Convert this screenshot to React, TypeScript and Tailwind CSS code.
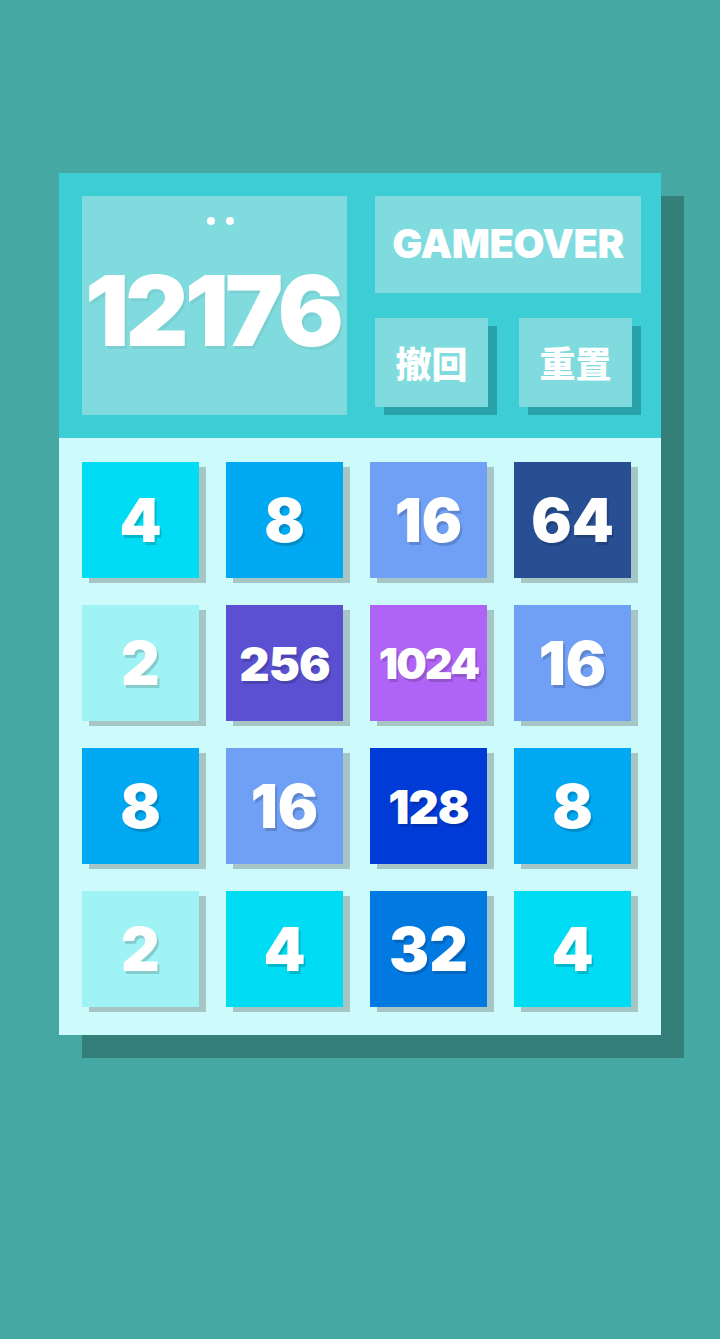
import React from "react";

const tiles: { v: number; bg: string }[] = [
  { v: 4, bg: "bg-[#00dcf4]" },
  { v: 8, bg: "bg-[#00a9f1]" },
  { v: 16, bg: "bg-[#6fa0f6]" },
  { v: 64, bg: "bg-[#284f93]" },
  { v: 2, bg: "bg-[#9ff3f5]" },
  { v: 256, bg: "bg-[#5a50d1]" },
  { v: 1024, bg: "bg-[#b064f6]" },
  { v: 16, bg: "bg-[#6fa0f6]" },
  { v: 8, bg: "bg-[#00a9f1]" },
  { v: 16, bg: "bg-[#6fa0f6]" },
  { v: 128, bg: "bg-[#003bd7]" },
  { v: 8, bg: "bg-[#00a9f1]" },
  { v: 2, bg: "bg-[#9ff3f5]" },
  { v: 4, bg: "bg-[#00dcf4]" },
  { v: 32, bg: "bg-[#0079e1]" },
  { v: 4, bg: "bg-[#00dcf4]" },
];

function sizeFor(v: number) {
  const n = String(v).length;
  if (n <= 2) return "text-[60px]";
  if (n === 3) return "text-[47px] tracking-[-1px]";
  return "text-[43px] tracking-[-2px]";
}

export default function App() {
  return (
    <div
      className="w-[720px] min-h-[1339px] bg-[#45a8a3] pt-[173px] pl-[59px]"
      style={{ fontFamily: "Inter, 'Noto Sans CJK SC', sans-serif" }}
    >
      <div className="w-[602px] shadow-[23px_23px_0_#347f7a]">
        {/* header */}
        <div className="h-[265px] bg-[#3ccdd5] pl-[23px] pt-[23px] flex gap-[28px]">
          <div className="w-[265px] h-[219px] bg-[#80dbde] flex flex-col items-center">
            <div className="flex gap-[11px] mt-[21px] ml-[12px]">
              <div className="w-[8px] h-[8px] rounded-full bg-white" />
              <div className="w-[8px] h-[8px] rounded-full bg-white" />
            </div>
            <div className="mt-[37px] text-white font-black text-[98px] leading-none tracking-[-4px] pr-[4px] [text-shadow:2px_3px_0_rgba(0,0,0,0.05)]">
              12176
            </div>
          </div>
          <div className="w-[266px] flex flex-col">
            <div className="h-[97px] bg-[#80dbde] flex items-center justify-center text-white font-black text-[40px] tracking-[-0.5px] pb-[2px]">
              GAMEOVER
            </div>
            <div className="flex gap-[31px] mt-[25px]">
              <div
                className="w-[113px] h-[89px] bg-[#80dbde] shadow-[9px_8px_0_#2aa2aa] flex items-center justify-center text-white font-black text-[36px] pb-[2px]"
                style={{ fontFamily: "'Noto Sans CJK SC', sans-serif" }}
              >
                撤回
              </div>
              <div
                className="w-[113px] h-[89px] bg-[#80dbde] shadow-[9px_8px_0_#2aa2aa] flex items-center justify-center text-white font-black text-[36px] pb-[2px]"
                style={{ fontFamily: "'Noto Sans CJK SC', sans-serif" }}
              >
                重置
              </div>
            </div>
          </div>
        </div>
        {/* board */}
        <div className="h-[597px] bg-[#cdfbfb] pl-[23px] pt-[24px]">
          <div className="grid grid-cols-[repeat(4,117px)] auto-rows-[116px] gap-x-[27px] gap-y-[27px]">
            {tiles.map((t, i) => (
              <div
                key={i}
                className={`${t.bg} shadow-[7px_5px_0_#a6c5c5] flex items-center justify-center text-white font-black leading-none ${sizeFor(t.v)} [text-shadow:2px_3px_0_rgba(0,0,0,0.16)]`}
              >
                {t.v}
              </div>
            ))}
          </div>
        </div>
      </div>
    </div>
  );
}
